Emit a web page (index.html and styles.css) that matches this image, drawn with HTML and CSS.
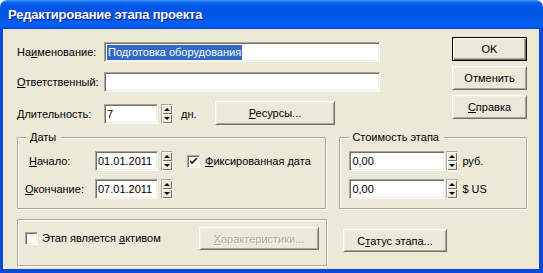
FILE: index.html
```html
<!DOCTYPE html>
<html lang="ru">
<head>
  <meta charset="UTF-8">
  <title>Редактирование этапа проекта</title>
  <link rel="stylesheet" href="styles.css">
</head>
<body>
  <div class="window">
    <div class="titlebar">
      <span class="title">Редактирование этапа проекта</span>
    </div>

    <div class="client">
      <div class="top">
        <div class="form">
          <div class="row">
            <label class="label">На<u>и</u>менование:</label>
            <div class="field field-wide"><span class="selected">Подготовка оборудования</span></div>
          </div>
          <div class="row row-second">
            <label class="label"><u>О</u>тветственный:</label>
            <div class="field field-wide"></div>
          </div>
          <div class="row row-third">
            <label class="label"><u>Д</u>лительность:</label>
            <div class="field field-short">7</div>
            <div class="spin">
              <span class="spin-btn"><i class="arrow arrow-up"></i></span>
              <span class="spin-btn"><i class="arrow arrow-down"></i></span>
            </div>
            <span class="unit unit-days">дн.</span>
            <button class="btn btn-resources"><u>Р</u>есурсы...</button>
          </div>
        </div>

        <div class="buttons">
          <button class="btn btn-default">OK</button>
          <button class="btn">Отменить</button>
          <button class="btn"><u>С</u>правка</button>
        </div>
      </div>

      <!-- Groups -->
      <div class="groups">
        <div class="group group-dates">
          <span class="legend">Даты</span>
          <div class="grow grow-first">
            <label class="glabel glabel-start"><u>Н</u>ачало:</label>
            <div class="field field-date">01.01.2011</div>
            <div class="spin">
              <span class="spin-btn"><i class="arrow arrow-up"></i></span>
              <span class="spin-btn"><i class="arrow arrow-down"></i></span>
            </div>
            <span class="check check-fixed">
              <svg width="7" height="7" viewBox="0 0 7 7"><path d="M0 2 L0 4 L2 6 L7 1 L7 -1 L2 4 Z" fill="#000"/></svg>
            </span>
            <span class="check-label"><u>Ф</u>иксированная дата</span>
          </div>
          <div class="grow">
            <label class="glabel glabel-end"><u>О</u>кончание:</label>
            <div class="field field-date">07.01.2011</div>
            <div class="spin">
              <span class="spin-btn"><i class="arrow arrow-up"></i></span>
              <span class="spin-btn"><i class="arrow arrow-down"></i></span>
            </div>
          </div>
        </div>

        <div class="group group-cost">
          <span class="legend">Стоимость этапа</span>
          <div class="grow grow-first">
            <div class="field field-money">0,00</div>
            <div class="spin spin-tight">
              <span class="spin-btn"><i class="arrow arrow-up"></i></span>
              <span class="spin-btn"><i class="arrow arrow-down"></i></span>
            </div>
            <span class="unit">руб.</span>
          </div>
          <div class="grow">
            <div class="field field-money">0,00</div>
            <div class="spin spin-tight">
              <span class="spin-btn"><i class="arrow arrow-up"></i></span>
              <span class="spin-btn"><i class="arrow arrow-down"></i></span>
            </div>
            <span class="unit">$ US</span>
          </div>
        </div>
      </div>

      <div class="bottom">
        <div class="group group-asset">
          <span class="check"></span>
          <span class="check-label">Этап является <u>а</u>ктивом</span>
          <button class="btn btn-disabled btn-props" disabled><u>Х</u>арактеристики...</button>
        </div>
        <button class="btn btn-status">С<u>т</u>атус этапа...</button>
      </div>
    </div>
  </div>
</body>
</html>
```

FILE: styles.css
```css
:root {
  --face: #ece9d8;
  --light: #f1efe2;
  --shadow: #aca899;
  --dark: #716f64;
  --frame: #0a49dc;
}

* {
  margin: 0;
  padding: 0;
  box-sizing: border-box;
}

body {
  width: 543px;
  height: 273px;
  background: #fff;
  font-family: 'Liberation Sans', Arial, sans-serif;
  font-size: 11px;
  color: #000;
  overflow: hidden;
}

u {
  text-decoration: underline;
  text-underline-offset: 1px;
}

.window {
  width: 543px;
  height: 273px;
}

/* Title bar */
.titlebar {
  height: 29px;
  border-radius: 7px 7px 0 0;
  background: linear-gradient(to bottom, #3d95ff 0, #0a5ff0 3px, #0055e8 7px, #0054e3 50%, #0060f5 85%, #0058ee 93%, #0043d0 100%);
  padding: 7px 0 0 8px;
}

.title {
  color: #fff;
  font-weight: bold;
  font-size: 13px;
  letter-spacing: -0.2px;
  text-shadow: 1px 1px 0 #0a1a8c;
}

.client {
  height: 244px;
  background: var(--face);
  border-left: 3px solid var(--frame);
  border-right: 4px solid var(--frame);
  border-bottom: 4px solid var(--frame);
  padding: 8px 12px 3px 14px;
  display: flex;
  flex-direction: column;
}

/* Top section */
.top {
  display: flex;
  height: 87px;
}

.form {
  flex: 1;
  padding-top: 5px;
}

.row {
  display: flex;
  align-items: center;
  height: 20px;
}

.row-second {
  margin-top: 10px;
}

.row-third {
  margin-top: 12px;
}

.label {
  width: 87px;
}

.field {
  height: 20px;
  background: #fff;
  border: 1px solid;
  border-color: var(--shadow) #fff #fff var(--shadow);
  box-shadow: inset 1px 1px 0 var(--dark), inset -1px -1px 0 var(--light);
  padding: 0 2px;
  line-height: 18px;
  white-space: nowrap;
  overflow: hidden;
}

.field-wide {
  width: 276px;
}

.field-short {
  width: 54px;
  margin-right: 3px;
}

.selected {
  background: #316ac5;
  color: #fff;
  padding: 1px 1px 2px;
}

.spin {
  width: 12px;
  height: 20px;
  display: flex;
  flex-direction: column;
  border: 1px solid var(--dark);
  border-color: var(--shadow) #fff #fff var(--shadow);
}

.spin-btn {
  flex: 1;
  display: flex;
  align-items: center;
  justify-content: center;
  background: var(--face);
  box-shadow: inset 1px 1px 0 #fff, inset -1px -1px 0 var(--dark);
}

.arrow {
  width: 0;
  height: 0;
  border-left: 3px solid transparent;
  border-right: 3px solid transparent;
}

.arrow-up {
  border-bottom: 3px solid #000;
}

.arrow-down {
  border-top: 3px solid #000;
}

.unit {
  margin-left: 4px;
}

.unit-days {
  margin-left: 8px;
  width: 34px;
}

/* Buttons */
.btn {
  font-family: inherit;
  font-size: 11px;
  color: #000;
  background: var(--face);
  border: 1px solid;
  border-color: #fff var(--dark) var(--dark) #fff;
  box-shadow: inset 1px 1px 0 var(--light), inset -1px -1px 0 var(--shadow);
  height: 24px;
  width: 75px;
}

.btn-default {
  border: 1px solid #000;
  box-shadow: inset 1px 1px 0 #fff, inset -1px -1px 0 var(--dark), inset -2px -2px 0 var(--shadow);
}

.btn-resources {
  width: 120px;
  margin-top: -3px;
  margin-bottom: -1px;
}

.buttons {
  width: 75px;
  display: flex;
  flex-direction: column;
  gap: 5px;
}

.btn-disabled {
  color: var(--shadow);
  text-shadow: 1px 1px 0 #fff;
}

/* Groups */
.groups {
  display: flex;
  margin-top: 13px;
  gap: 13px;
}

.group {
  border: 1px solid var(--shadow);
  box-shadow: inset 1px 1px 0 #fff, 1px 1px 0 #fff;
}

.group-dates,
.group-cost {
  height: 72px;
  display: flex;
  flex-direction: column;
}

.group-dates {
  width: 310px;
}

.group-cost {
  width: 188px;
}

.legend {
  align-self: flex-start;
  margin: -7px 0 0 9px;
  padding: 0 5px 0 3px;
  line-height: 13px;
  background: var(--face);
}

.grow {
  display: flex;
  align-items: center;
  height: 20px;
  margin-top: 8px;
}

.grow-first {
  margin-top: 7px;
}

.group-cost .grow {
  padding-left: 9px;
}

.glabel {
  width: 77px;
}

.glabel-start {
  padding-left: 11px;
}

.glabel-end {
  padding-left: 7px;
}

.field-date {
  width: 63px;
  margin-right: 3px;
}

.field-money {
  width: 96px;
}

.spin-tight {
  margin-left: 1px;
}

.check {
  width: 13px;
  height: 13px;
  background: #fff;
  border: 1px solid;
  border-color: var(--shadow) #fff #fff var(--shadow);
  box-shadow: inset 1px 1px 0 var(--dark), inset -1px -1px 0 var(--light);
  display: flex;
  align-items: center;
  justify-content: center;
}

.check-fixed {
  margin-left: 14px;
}

.check-label {
  margin-left: 5px;
}

/* Bottom */
.bottom {
  display: flex;
  align-items: flex-start;
  margin-top: 10px;
}

.group-asset {
  width: 310px;
  height: 47px;
  display: flex;
  align-items: flex-start;
  padding: 7px 7px 0 7px;
}

.group-asset .check {
  margin-top: 5px;
}

.group-asset .check-label {
  margin-left: 4px;
  margin-top: 5px;
}

.btn-props {
  width: 120px;
  height: 23px;
  margin-left: auto;
}

.btn-status {
  width: 104px;
  height: 23px;
  margin: 10px 0 0 16px;
}
```
